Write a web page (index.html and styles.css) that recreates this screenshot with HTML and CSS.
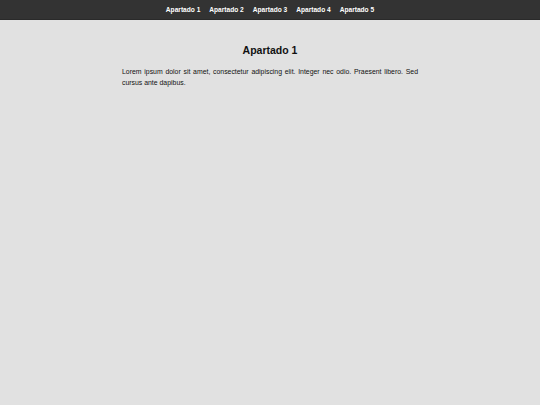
FILE: index.html
```html
<!DOCTYPE html>
<html lang="es">
<head>
<meta charset="utf-8">
<title>Apartados</title>
<link rel="stylesheet" href="styles.css">
</head>
<body>
<nav class="nav">
  <a href="#" class="nav-link">Apartado 1</a>
  <a href="#" class="nav-link">Apartado 2</a>
  <a href="#" class="nav-link">Apartado 3</a>
  <a href="#" class="nav-link">Apartado 4</a>
  <a href="#" class="nav-link">Apartado 5</a>
</nav>
<main class="content">
  <h1 class="title">Apartado 1</h1>
  <p class="text">Lorem ipsum dolor sit amet, consectetur adipiscing elit. Integer nec odio. Praesent libero. Sed cursus ante dapibus.</p>
</main>
</body>
</html>
```
FILE: styles.css
```css
html, body {
  margin: 0;
  padding: 0;
  background: #e1e1e1;
  font-family: "Liberation Sans", Arial, sans-serif;
  height: 100%;
}
.nav {
  background: #333333;
  height: 19px;
  display: flex;
  justify-content: center;
  align-items: center;
  gap: 9px;
  border-bottom: 1px solid #2a2a2a;
}
.nav-link {
  color: #ffffff;
  text-decoration: none;
  font-weight: bold;
  font-size: 6.6px;
}
.content {
  width: 296px;
  margin: 0 auto;
  padding-top: 24px;
}
.title {
  margin: 0 0 10px;
  font-size: 10.5px;
  text-align: center;
  color: #111;
}
.text {
  margin: 0;
  font-size: 6.9px;
  line-height: 11px;
  text-align: justify;
  color: #111;
}
```
